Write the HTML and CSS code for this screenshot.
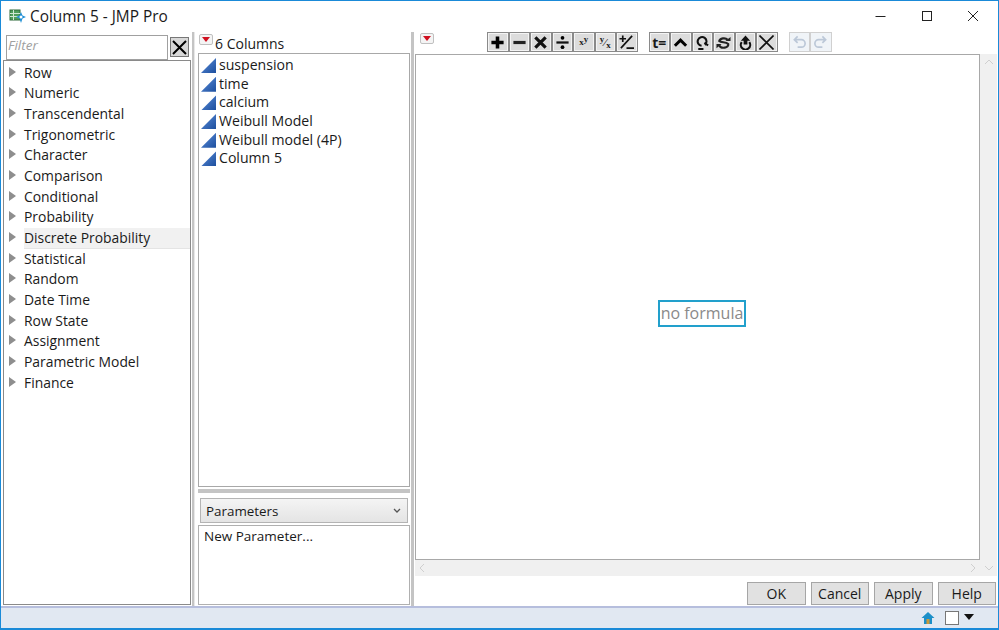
FILE: index.html
```html
<!DOCTYPE html>
<html lang="en">
<head>
<meta charset="utf-8">
<title>Column 5 - JMP Pro</title>
<link rel="stylesheet" href="styles.css">
</head>
<body>
<div class="window">
  <header class="titlebar">
    <svg class="app-icon" width="18" height="16" viewBox="0 0 18 16">
      <rect x="1" y="2" width="10" height="10" fill="#4f9d5b" stroke="#2f6b3a"/>
      <path d="M1 5.500h10M1 8.500h10M4.500 2v10" stroke="#cfe8d2" fill="none"/>
      <path d="M12 4l1.500 3.500L17 9l-3.500 1.500L12 15l-1.500-4.500L7 9l3.500-1.500z" fill="#1f8fd6"/>
      <circle cx="12" cy="9" r="1.500" fill="#fff"/>
    </svg>
    <span class="title">Column 5 - JMP Pro</span>
    <div class="winctl">
      <svg width="12" height="12" viewBox="0 0 12 12"><path d="M0.500 6.500h10" stroke="#222"/></svg>
      <svg width="12" height="12" viewBox="0 0 12 12"><rect x="1.500" y="1.500" width="9" height="9" fill="none" stroke="#222"/></svg>
      <svg width="12" height="12" viewBox="0 0 12 12"><path d="M1 1l10 10M11 1L1 11" stroke="#222" fill="none"/></svg>
    </div>
  </header>

  <main class="panes">
    <section class="left">
      <div class="filter-row">
        <div class="filter">Filter</div>
        <button class="filter-x"><svg width="15" height="15" viewBox="0 0 15 15"><path d="M1 1l13 13M14 1L1 14" stroke="#000" stroke-width="2" fill="none"/></svg></button>
      </div>
      <ul class="tree">
        <li>Row</li>
        <li>Numeric</li>
        <li>Transcendental</li>
        <li>Trigonometric</li>
        <li>Character</li>
        <li>Comparison</li>
        <li>Conditional</li>
        <li>Probability</li>
        <li class="hover">Discrete Probability</li>
        <li>Statistical</li>
        <li>Random</li>
        <li>Date Time</li>
        <li>Row State</li>
        <li>Assignment</li>
        <li>Parametric Model</li>
        <li>Finance</li>
      </ul>
    </section>

    <div class="split"></div>

    <section class="middle">
      <div class="col-head"><span class="red-menu"></span><span>6 Columns</span></div>
      <ul class="cols">
        <li>suspension</li>
        <li>time</li>
        <li>calcium</li>
        <li>Weibull Model</li>
        <li>Weibull model (4P)</li>
        <li>Column 5</li>
      </ul>
      <div class="hsplit"></div>
      <div class="combo"><span>Parameters</span>
        <svg width="8" height="6" viewBox="0 0 8 6"><path d="M1 1l3 3 3-3" stroke="#555" stroke-width="1.300" fill="none"/></svg>
      </div>
      <div class="params">New Parameter...</div>
    </section>

    <div class="split narrow"></div>

    <section class="right">
      <div class="toolbar">
        <span class="red-menu tb-menu"></span>
        <div class="tools">
          <button class="tool"><svg viewBox="0 0 16 16"><path d="M8 1.500v13M1.500 8h13" stroke="#000" stroke-width="3.800"/></svg></button>
          <button class="tool"><svg viewBox="0 0 16 16"><path d="M1.500 8h13" stroke="#222" stroke-width="3.400"/></svg></button>
          <button class="tool"><svg viewBox="0 0 16 16"><path d="M2.500 2.500l11 11M13.500 2.500l-11 11" stroke="#111" stroke-width="3.400"/></svg></button>
          <button class="tool"><svg viewBox="0 0 16 16"><path d="M1.500 8h13" stroke="#111" stroke-width="2.400"/><circle cx="8" cy="3" r="2"/><circle cx="8" cy="13" r="2"/></svg></button>
          <button class="tool math">x<sup>y</sup></button>
          <button class="tool math frac"><sup>y</sup>&#8260;<sub>x</sub></button>
          <button class="tool"><svg viewBox="0 0 16 16"><path d="M0.500 4h7M4 0.500v7M14 1L2 14M8 14h8" stroke="#111" stroke-width="1.800" fill="none"/></svg></button>
        </div>
        <div class="tools">
          <button class="tool tee">t=</button>
          <button class="tool"><svg viewBox="0 0 16 16"><path d="M2 11.500L8 5.500l6 6" stroke="#000" stroke-width="3.200" fill="none"/></svg></button>
          <button class="tool"><svg viewBox="0 0 16 16"><path d="M7 11.500a4.700 4.700 0 1 1 3.500-1M10 8.500l4 2.500M3.500 15h5.500" stroke="#111" stroke-width="2.200" fill="none"/></svg></button>
          <button class="tool"><svg viewBox="0 0 16 16"><path d="M12.500 5a5 3.500 0 0 0-9 1.500c2 2 7 .5 9.500 3a4.500 3 0 0 1-9.500 1.500" stroke="#222" stroke-width="2.300" fill="none"/><path d="M10 6.500h5.500V2zM6 9.500H.5V14z" fill="#222"/></svg></button>
          <button class="tool"><svg viewBox="0 0 16 16"><path d="M8 0.500L3 6h3v4h4V6h3z" fill="#111"/><path d="M4 7.500a5 5 0 1 0 8 0" stroke="#111" stroke-width="2.200" fill="none"/></svg></button>
          <button class="tool"><svg viewBox="0 0 16 16"><path d="M0.500 0.500l15 15M15.500 0.500l-15 15" stroke="#111" stroke-width="1.700" fill="none"/></svg></button>
        </div>
        <div class="tools">
          <button class="tool off"><svg viewBox="0 0 16 16"><path d="M3 5h7a3.500 3.500 0 0 1 0 8H6M6 1.500L2.500 5 6 8.500" stroke="#bcc8d8" stroke-width="1.800" fill="none"/></svg></button>
          <button class="tool off"><svg viewBox="0 0 16 16"><path d="M13 5H6a3.500 3.500 0 0 0 0 8h4M10 1.500L13.500 5 10 8.500" stroke="#bcc8d8" stroke-width="1.800" fill="none"/></svg></button>
        </div>
      </div>

      <div class="editor-wrap">
        <div class="editor-col">
          <div class="editor"><div class="formula">no formula</div></div>
          <div class="hscroll">
            <svg width="6" height="10" viewBox="0 0 6 10"><path d="M5 1L1 5l4 4" stroke="#cfcfcf" fill="none"/></svg>
            <svg width="6" height="10" viewBox="0 0 6 10"><path d="M1 1l4 4-4 4" stroke="#cfcfcf" fill="none"/></svg>
          </div>
        </div>
        <div class="vscroll">
          <svg width="10" height="6" viewBox="0 0 10 6"><path d="M1 5l4-4 4 4" stroke="#cfcfcf" fill="none"/></svg>
          <svg width="10" height="6" viewBox="0 0 10 6"><path d="M1 1l4 4 4-4" stroke="#cfcfcf" fill="none"/></svg>
        </div>
      </div>

      <div class="actions">
        <button class="btn">OK</button>
        <button class="btn">Cancel</button>
        <button class="btn">Apply</button>
        <button class="btn">Help</button>
      </div>
    </section>
  </main>

  <footer class="status">
    <svg width="14" height="14" viewBox="0 0 14 14"><path d="M7 1L0.500 7H3v6h8V7h2.500z" fill="#1c8fc8"/><rect x="5.500" y="8" width="3" height="5" fill="#c99a3c"/></svg>
    <span class="check"></span>
    <span class="down"></span>
  </footer>
</div>
</body>
</html>
```

FILE: styles.css
```css
* { box-sizing: border-box; }
html, body { margin: 0; height: 100%; }
body {
  font-family: "Open Sans", "Noto Sans", sans-serif;
  font-size: 14px;
  color: #1a1a1a;
  background: #fff;
  overflow: hidden;
}
ul { list-style: none; margin: 0; padding: 0; }
button { font: inherit; color: inherit; margin: 0; padding: 0; }

.window {
  width: 999px;
  height: 630px;
  display: flex;
  flex-direction: column;
  border: 1px solid #1a8ad8;
  border-bottom-width: 2px;
  padding: 0 1px;
}
.titlebar {
  height: 31px;
  flex: none;
  display: flex;
  align-items: center;
  padding-left: 7px;
  padding-bottom: 1px;
}
.app-icon { flex: none; margin-right: 3px; }
.title { font-size: 15.400px; }
.winctl {
  margin-left: auto;
  display: flex;
  gap: 34px;
  padding-right: 18px;
}

.panes { flex: 1; min-height: 0; display: flex; }

.left { width: 189px; flex: none; display: flex; flex-direction: column; padding-left: 1px; }
.filter-row { height: 28px; flex: none; display: flex; gap: 2px; padding: 3px 0 0 3px; }
.filter {
  width: 162px;
  height: 25px;
  border: 1px solid #a0a0a0;
  font-style: italic;
  color: #a0a0a0;
  font-size: 13.500px;
  line-height: 19px;
  padding-left: 1px;
}
.filter-x {
  width: 19px;
  height: 20px;
  margin-top: 2px;
  background: #d8d8d8;
  border: 1px solid #777;
  display: flex;
  align-items: center;
  justify-content: center;
}
.tree {
  flex: 1;
  border: 1px solid #8a8a8a;
  margin-bottom: 1px;
  padding-top: 1.500px;
}
.tree li {
  height: 20.700px;
  line-height: 20.700px;
  margin-left: 20px;
  position: relative;
  font-size: 13.900px;
  white-space: nowrap;
}
.tree li::before {
  content: "";
  position: absolute;
  left: -15px;
  top: 4px;
  border-left: 7px solid #8e8e8e;
  border-top: 5px solid transparent;
  border-bottom: 5px solid transparent;
}
.tree li.hover { background: #f1f1f1; border-bottom: 1px solid #e4e4e4; }

.split {
  width: 7px;
  flex: none;
  background: linear-gradient(to right, #fff 0 1px, #c4c4c4 1px 3px, #e8e8e8 3px 4px, #fff 4px);
}
.split.narrow { width: 5px; background: linear-gradient(to right, #fff 0 1px, #c4c4c4 1px 4px, #fff 4px); }

.middle { width: 212px; flex: none; display: flex; flex-direction: column; }
.col-head { height: 21px; flex: none; display: flex; align-items: flex-start; gap: 2px; padding-top: 2px; padding-left: 1px; font-size: 14px; line-height: 20px; }
.red-menu {
  position: relative;
  display: block;
  width: 14px;
  height: 11px;
  flex: none;
  background: #f4f4f4;
  border: 1px solid #c0c0c0;
  border-radius: 2px;
}
.red-menu::after {
  content: "";
  position: absolute;
  left: 2px;
  top: 2px;
  border-top: 5px solid #d01020;
  border-left: 4px solid transparent;
  border-right: 4px solid transparent;
}
.cols { height: 434px; flex: none; border: 1px solid #a8a8a8; padding-top: 2px; }
.cols li {
  height: 18.700px;
  line-height: 18.700px;
  padding-left: 20px;
  position: relative;
  font-size: 14.100px;
  white-space: nowrap;
}
.cols li::before {
  content: "";
  position: absolute;
  left: 2px;
  top: 2px;
  width: 15px;
  height: 15px;
  background: linear-gradient(135deg, #5d8fdc, #1d4f9e);
  clip-path: polygon(100% 0, 100% 100%, 0 100%);
}
.hsplit { height: 4px; flex: none; margin-top: 2px; background: #c4c4c4; }
.combo {
  height: 25px;
  flex: none;
  margin: 5px 2px 0;
  border: 1px solid #b4b4b4;
  background: linear-gradient(#f4f4f4, #e4e4e4);
  display: flex;
  align-items: center;
  justify-content: space-between;
  padding: 0 6px 0 5px;
  font-size: 13.400px;
}
.params {
  flex: 1;
  margin: 2px 0 1px;
  border: 1px solid #b0b0b0;
  padding: 1px 0 0 5px;
  font-size: 13.500px;
  line-height: 19px;
}

.right { flex: 1; min-width: 0; display: flex; flex-direction: column; }
.toolbar { height: 22px; flex: none; display: flex; padding-left: 5px; }
.tb-menu { margin-top: 1px; margin-right: 53px; }
.tools { display: flex; margin-right: 11px; height: 20px; }
.tool {
  width: 21.500px;
  height: 20px;
  border: 1px solid #8a8a8a;
  outline: 1px solid #f4f4f4;
  outline-offset: -2px;
  background: #dcdcdc;
  display: flex;
  align-items: center;
  justify-content: center;
  overflow: hidden;
}
.tool svg { width: 15px; height: 15px; display: block; }
.tool.math { font-family: "Liberation Serif", serif; font-weight: 700; font-size: 9px; line-height: 1; }
.tool.frac { font-size: 11px; background: #e2e2e2; }
.tool sup, .tool sub { font-size: 9px; line-height: 1; position: relative; }
.tool sup { top: -3px; }
.tool sub { top: 3px; }
.tool.tee { font-size: 14px; font-weight: 700; }
.tool.off { background: #f0f4f8; border-color: #d0d0d0; outline: 0; }

.editor-wrap { flex: 1; min-height: 0; display: flex; }
.editor-col { flex: 1; min-width: 0; display: flex; flex-direction: column; }
.editor {
  flex: 1;
  border: 1px solid #a8a8a8;
  display: flex;
  align-items: center;
  justify-content: center;
}
.formula {
  width: 88px;
  height: 27px;
  border: 2px solid #22a0cc;
  color: #8a8a8a;
  font-size: 16px;
  line-height: 23px;
  text-align: center;
  white-space: nowrap;
  margin-left: 9px;
  margin-top: 12px;
}
.hscroll {
  height: 16px;
  flex: none;
  background: #f0f0f0;
  display: flex;
  align-items: center;
  justify-content: space-between;
  padding: 0 4px;
}
.vscroll {
  width: 17px;
  flex: none;
  background: #f0f0f0;
  display: flex;
  flex-direction: column;
  align-items: center;
  justify-content: space-between;
  padding: 5px 0;
}
.actions { height: 30px; flex: none; display: flex; justify-content: flex-end; gap: 5px; padding: 6px 1px 0 0; }
.btn {
  width: 58.500px;
  height: 23px;
  background: #e1e1e1;
  border: 1px solid #a6a6a6;
  font-size: 14px;
  line-height: 20px;
}
.status {
  height: 22px;
  flex: none;
  margin: 0 -1px;
  background: #e1e8f2;
  border-top: 2px solid #b6bedd;
  display: flex;
  align-items: center;
  justify-content: flex-end;
  padding-right: 24px;
}
.check { width: 14px; height: 14px; margin-left: 10px; background: #fff; border: 1px solid #777; }
.down {
  margin-left: 5px;
  margin-bottom: 3px;
  border-top: 6px solid #111;
  border-left: 5px solid transparent;
  border-right: 5px solid transparent;
}
```
